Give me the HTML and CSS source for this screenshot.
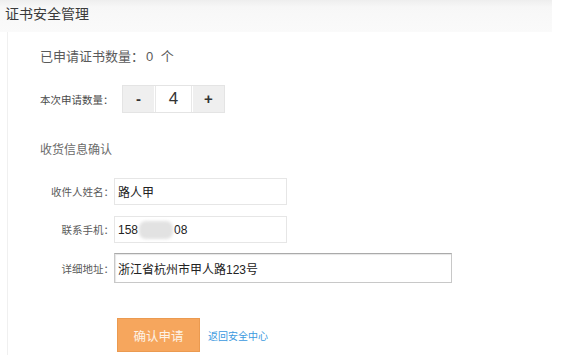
FILE: index.html
```html
<!DOCTYPE html>
<html lang="zh-CN">
<head>
<meta charset="utf-8">
<title>证书安全管理</title>
<link rel="stylesheet" href="styles.css">
</head>
<body>
<div class="header">证书安全管理</div>
<div class="panel">
  <div class="count-row">已申请证书数量：<span class="num">0</span> 个</div>
  <div class="stepper-row">
    <span class="small-label">本次申请数量：</span>
    <div class="stepper">
      <span class="step-btn">-</span>
      <span class="step-val">4</span>
      <span class="step-btn">+</span>
    </div>
  </div>
  <div class="section-title">收货信息确认</div>
  <div class="form-row">
    <span class="form-label">收件人姓名：</span>
    <div class="input short">路人甲</div>
  </div>
  <div class="form-row row-phone">
    <span class="form-label">联系手机：</span>
    <div class="input short"><span>158</span><span class="blur"></span><span>08</span></div>
  </div>
  <div class="form-row row-addr">
    <span class="form-label">详细地址：</span>
    <div class="input long">浙江省杭州市甲人路123号</div>
  </div>
  <div class="actions">
    <button class="submit">确认申请</button>
    <a class="back" href="#">返回安全中心</a>
  </div>
</div>
</body>
</html>
```

FILE: styles.css
```css
html, body {
  margin: 0;
  padding: 0;
  background: #fff;
  font-family: "Liberation Sans", "Noto Sans CJK SC", sans-serif;
  color: #333;
  overflow: hidden;
}
.header {
  width: 547px;
  height: 32px;
  padding-left: 5px;
  line-height: 29px;
  font-size: 14px;
  color: #3a3a3a;
  background: linear-gradient(#eeeeee 0px, #f7f7f7 7px, #fafafa 100%);
}
.panel {
  margin-left: 7px;
  border-left: 1px solid #f0f0f0;
  padding-left: 32px;
  padding-top: 16px;
  height: 307px;
}
.count-row {
  font-size: 13px;
  line-height: 18px;
  color: #5a5a5a;
}
.count-row .num {
  margin: 0 4px 0 2px;
}
.stepper-row {
  display: flex;
  align-items: center;
  margin-top: 19px;
}
.small-label {
  font-size: 10.5px;
  color: #4a4a4a;
  width: 82px;
}
.stepper {
  display: flex;
  height: 26px;
  border: 1px solid #e4e4e4;
}
.step-btn {
  width: 31px;
  background: #efefef;
  text-align: center;
  line-height: 26px;
  font-size: 15px;
  font-weight: bold;
  color: #333;
}
.step-val {
  width: 35px;
  margin: 0 1px;
  background: #fff;
  border-left: 1px solid #e8e8e8;
  border-right: 1px solid #e8e8e8;
  text-align: center;
  line-height: 26px;
  font-size: 17px;
  color: #333;
}
.section-title {
  margin-top: 28px;
  font-size: 12px;
  line-height: 18px;
  color: #6a6a6a;
}
.form-row {
  display: flex;
  align-items: center;
  margin-top: 19px;
}
.row-phone { margin-top: 11px; }
.row-addr { margin-top: 10px; }
.form-label {
  width: 72px;
  text-align: right;
  font-size: 10.5px;
  color: #5a5a5a;
  margin-left: 2px;
}
.input {
  box-sizing: border-box;
  display: flex;
  align-items: center;
  padding-left: 3px;
  font-size: 12px;
  color: #222;
  background: #fff;
}
.input.short {
  width: 173px;
  height: 27px;
  border: 1px solid #e6e6e6;
}
.input.long {
  width: 338px;
  height: 30px;
  border: 1px solid #c8c8c8;
  border-top-color: #aaa;
  box-shadow: inset 1px 1px 1px #e6e6e6;
}
.blur {
  display: inline-block;
  width: 34px;
  height: 18px;
  margin: 0 1px 0 1px;
  border-radius: 7px;
  background: #e2e2e2;
  filter: blur(1.5px);
}
.actions {
  display: flex;
  align-items: center;
  margin-top: 35px;
  margin-left: 77px;
}
.submit {
  width: 83px;
  height: 34px;
  border: 1px solid #eb9a50;
  background: #f6a65d;
  color: #fdf2e6;
  font-family: "Liberation Sans", "Noto Sans CJK SC", sans-serif;
  font-size: 12.5px;
  padding: 0;
}
.back {
  margin-left: 8px;
  font-size: 10px;
  color: #3b9ae0;
  text-decoration: none;
}
```
